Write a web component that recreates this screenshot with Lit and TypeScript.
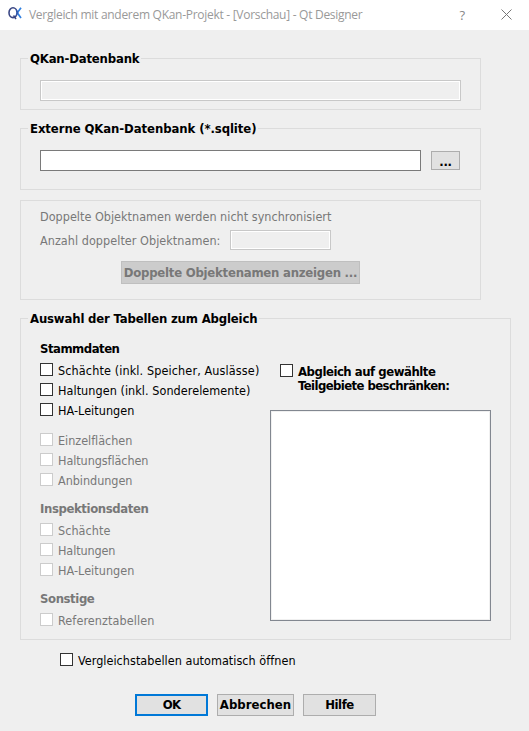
import { LitElement, html, css } from "lit";
import { customElement, property } from "lit/decorators.js";

/** A run of text tracked so that it occupies a given advance width. */
@customElement("fit-text")
class FitText extends LitElement {
  @property({ type: Number }) w = 0;
  @property() text = "";
  static styles = css`
    :host { display: inline-block; white-space: pre; flex: none; }
    span { display: inline-block; }
  `;
  render() {
    return html`<span>${this.text}</span>`;
  }
  updated() {
    const s = this.renderRoot.querySelector("span") as HTMLElement;
    s.style.letterSpacing = "0px";
    const natural = s.getBoundingClientRect().width;
    if (this.w && natural) {
      s.style.letterSpacing = `${(this.w + 0.4 - natural) / this.text.length}px`;
    }
  }
}

@customElement("check-row")
class CheckRow extends LitElement {
  @property() text = "";
  @property({ type: Number }) w = 0;
  @property({ type: Boolean, reflect: true }) disabled = false;
  static styles = css`
    :host { display: flex; height: 20px; color: #000; line-height: 22px; }
    .box { box-sizing: border-box; width: 13px; height: 13px; margin: 3px 5px 0 0; border: 1px solid #333; background: #fff; flex: none; }
    :host([disabled]) { color: #787878; }
    :host([disabled]) .box { border-color: #ccc; }
  `;
  render() {
    return html`<span class="box"></span><fit-text .text=${this.text} .w=${this.w}></fit-text>`;
  }
}

@customElement("app-root")
class AppRoot extends LitElement {
  static styles = css`
    :host { display: flex; flex-direction: column; width: 529px; height: 731px; overflow: hidden; background: #efefef; color: #000; font: 12.5px/20px "DejaVu Sans Condensed", "DejaVu Sans", sans-serif; font-stretch: condensed; }
    * { box-sizing: border-box; }
    .titlebar { height: 30px; flex: none; display: flex; align-items: center; background: #fff; color: #999; padding-left: 8px; font: 12px/30px "Open Sans", sans-serif; }
    .logo { width: 14px; height: 13px; margin-right: 7px; margin-top: -3px; }
    .help { margin-left: auto; margin-right: 36px; font-size: 13px; line-height: 28px; color: #888; }
    .close { width: 11px; height: 11px; margin-right: 17px; margin-top: -2px; }
    .body { padding: 28px 18px 0 20px; display: flex; flex-direction: column; }
    .group { border: 1px solid #dcdcdc; width: 461px; padding: 0 19px; display: flex; flex-direction: column; align-items: flex-start; flex: none; }
    .bold, .legend, .head, .btn { font-size: 13px; font-weight: bold; }
    .legend { height: 18px; line-height: 18px; margin: -9px 0 0 -12px; padding: 0 2px; background: #efefef; flex: none; }
    .g1 { height: 52px; }
    .g2 { height: 62px; margin-top: 18px; }
    .g3 { height: 100px; margin-top: 10px; color: #787878; padding-top: 6px; }
    .g4 { height: 322px; width: 491px; margin-top: 18px; }
    .input { height: 21px; border: 1px solid #7a7a7a; background: #fff; }
    .input.off { border-color: #c8c8c8; background: #efefef; box-shadow: inset 0 0 0 1px #fff; }
    .full { width: 421px; margin-top: 12px; }
    .pick { display: flex; align-items: center; gap: 10px; margin-top: 12px; }
    .path { width: 381px; }
    .count { display: flex; align-items: flex-start; line-height: 22px; margin-top: 3px; height: 21px; }
    .num { width: 101px; height: 20px; margin-left: 10px; margin-top: 0; }
    .btn { display: flex; justify-content: center; align-items: center; border: 1px solid #adadad; background: #e1e1e1; height: 22px; width: 73px; line-height: 20px; }
    .browse { width: 29px; height: 19px; line-height: 17px; padding-top: 2px; }
    .show { width: 239px; height: 23px; margin: 10px 0 0 81px; border-color: #bfbfbf; background: #ccc; color: #787878; }
    .cols { display: flex; }
    .left { width: 230px; padding-top: 11px; }
    .head { height: 20px; line-height: 20px; }
    .head.first { margin-bottom: 1px; }
    .head.dim { color: #787878; }
    .gap { height: 10px; }
    .gap.short { height: 9px; }
    .head.last { margin-bottom: 1px; }
    .right { padding-top: 32px; }
    .restrict { display: flex; padding-left: 10px; height: 50px; line-height: 14px; }
    .box { width: 13px; height: 13px; border: 1px solid #333; background: #fff; margin: 4px 5px 0 0; flex: none; }
    .lines { display: flex; flex-direction: column; padding-top: 5px; }
    .list { width: 221px; height: 211px; border: 1px solid #828790; background: #fff; box-shadow: inset 0 0 0 1px #f0f0f0; }
    .auto { margin: 10px 0 0 40px; }
    .actions { display: flex; gap: 9px; margin: 24px 0 0 115px; }
    .ok { border: 2px solid #0078d7; }
    .cancel { width: 77px; }
  `;
  private t(text: string, w: number) {
    return html`<fit-text .text=${text} .w=${w}></fit-text>`;
  }
  private c(text: string, w: number, disabled = false) {
    return html`<check-row .text=${text} .w=${w} ?disabled=${disabled}></check-row>`;
  }
  render() {
    return html`
      <div class="titlebar">
        <svg class="logo" viewBox="0 0 14 13" fill="none">
          <ellipse cx="5" cy="5.7" rx="4" ry="4.9" stroke="#3a4684" stroke-width="1.6" />
          <path d="M5.5 8.5L8 12" stroke="#3a4684" stroke-width="1.5" />
          <path d="M13 .7L9.3 5.8L13 11" stroke="#2f7fe0" stroke-width="1.7" />
          <path d="M8 2.5L9.8 5.5L8 8.8" stroke="#3558ae" stroke-width="1.2" />
        </svg>
        ${this.t("Vergleich mit anderem QKan-Projekt - [Vorschau] - Qt Designer", 333)}
        <span class="help">?</span>
        <svg class="close" viewBox="0 0 11 11"><path d="M.5 .5L10.5 10.5M10.5 .5L.5 10.5" stroke="#777" /></svg>
      </div>
      <div class="body">
        <div class="group g1">
          <div class="legend">${this.t("QKan-Datenbank", 109)}</div>
          <div class="input off full"></div>
        </div>
        <div class="group g2">
          <div class="legend">${this.t("Externe QKan-Datenbank (*.sqlite)", 226)}</div>
          <div class="pick"><div class="input path"></div><div class="btn browse">${this.t("...", 12)}</div></div>
        </div>
        <div class="group g3">
          ${this.t("Doppelte Objektnamen werden nicht synchronisiert", 291)}
          <div class="count">${this.t("Anzahl doppelter Objektnamen:", 180)}<div class="input off num"></div></div>
          <div class="btn show">${this.t("Doppelte Objektenamen anzeigen ...", 233)}</div>
        </div>
        <div class="group g4">
          <div class="legend">${this.t("Auswahl der Tabellen zum Abgleich", 227)}</div>
          <div class="cols">
            <div class="left">
              <div class="head first">${this.t("Stammdaten", 79)}</div>
              ${this.c("Schächte (inkl. Speicher, Auslässe)", 201)}
              ${this.c("Haltungen (inkl. Sonderelemente)", 192)}
              ${this.c("HA-Leitungen", 76)}
              <div class="gap"></div>
              ${this.c("Einzelflächen", 74, true)}
              ${this.c("Haltungsflächen", 90, true)}
              ${this.c("Anbindungen", 74, true)}
              <div class="gap short"></div>
              <div class="head dim last">${this.t("Inspektionsdaten", 108)}</div>
              ${this.c("Schächte", 52, true)}
              ${this.c("Haltungen", 57, true)}
              ${this.c("HA-Leitungen", 76, true)}
              <div class="gap short"></div>
              <div class="head dim last">${this.t("Sonstige", 54)}</div>
              ${this.c("Referenztabellen", 96, true)}
            </div>
            <div class="right">
              <div class="restrict bold">
                <span class="box"></span>
                <div class="lines">${this.t("Abgleich auf gewählte", 137)}${this.t("Teilgebiete beschränken:", 151)}</div>
              </div>
              <div class="list"></div>
            </div>
          </div>
        </div>
        <div class="auto">${this.c("Vergleichstabellen automatisch öffnen", 217)}</div>
        <div class="actions">
          <div class="btn ok">${this.t("OK", 17)}</div>
          <div class="btn cancel">${this.t("Abbrechen", 71)}</div>
          <div class="btn">${this.t("Hilfe", 28)}</div>
        </div>
      </div>
    `;
  }
}
